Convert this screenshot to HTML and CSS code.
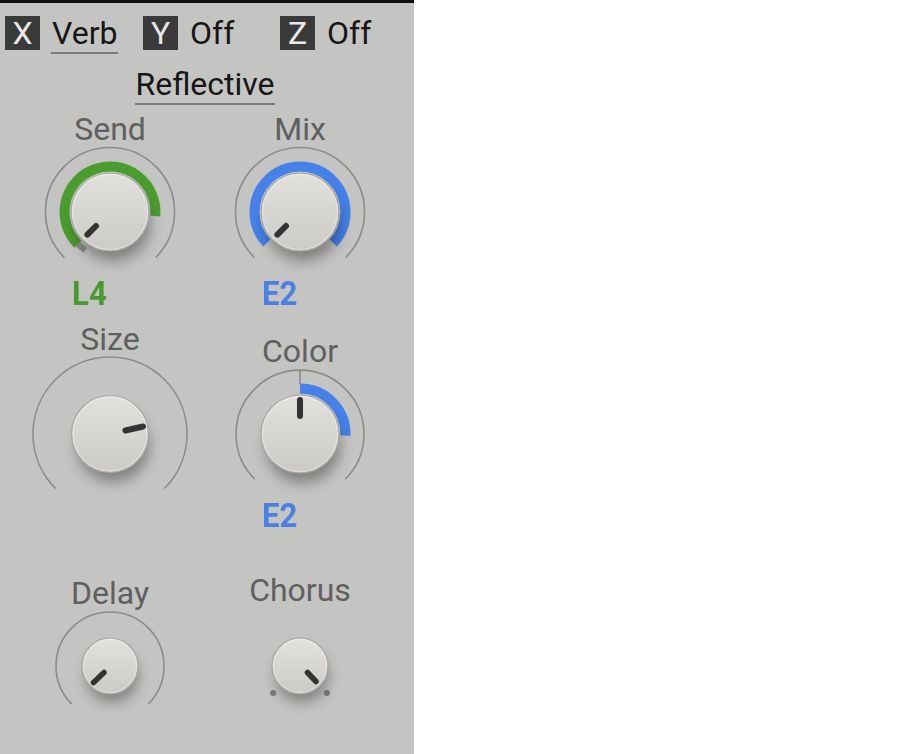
FILE: index.html
```html
<!DOCTYPE html>
<html lang="en">

<head>
  <meta charset="UTF-8">
  <meta name="viewport" content="width=device-width, initial-scale=1.0">
  <title>Verb - Reflective</title>
  <link rel="stylesheet" href="styles.css">
</head>

<body>
  <div class="panel">
    <div class="slots">
      <div class="slot slot-x"><span class="key">X</span><span class="mode mode-on">Verb</span></div>
      <div class="slot slot-y"><span class="key">Y</span><span class="mode">Off</span></div>
      <div class="slot"><span class="key">Z</span><span class="mode">Off</span></div>
    </div>
    <div class="preset"><span>Reflective</span></div>

    <div class="row row-1">
      <div class="cell">
        <div class="label">Send</div>
        <svg class="knob" width="190" height="128" viewBox="-95 -64 190 128">
          <path class="track" d="M -45.6 45.6 A 64.5 64.5 0 1 1 45.6 45.6" />
          <path class="stub" d="M -24.78 38.16 A 45.5 45.5 0 0 1 -32.17 32.17" />
          <path class="ring ring-green" d="M -32.17 32.17 A 45.5 45.5 0 1 1 45.33 3.97" />
          <circle class="shadow" cx="3" cy="12" r="37" />
          <circle class="face" r="39" />
          <circle class="gloss" r="37.5" />
          <line class="pointer" x1="-14" y1="14" x2="-22.6" y2="22.6" />
        </svg>
        <div class="value value-green"><span>L4</span></div>
      </div>
      <div class="cell">
        <div class="label">Mix</div>
        <svg class="knob" width="190" height="128" viewBox="-95 -64 190 128">
          <path class="track" d="M -45.6 45.6 A 64.5 64.5 0 1 1 45.6 45.6" />
          <path class="ring ring-blue" d="M -33.28 31.03 A 45.5 45.5 0 1 1 33.28 31.03" />
          <circle class="shadow" cx="3" cy="12" r="37" />
          <circle class="face" r="39" />
          <circle class="gloss" r="37.5" />
          <line class="pointer" x1="-14" y1="14" x2="-22.6" y2="22.6" />
        </svg>
        <div class="value value-blue"><span>E2</span></div>
      </div>
    </div>

    <div class="row row-2">
      <div class="cell">
        <div class="label">Size</div>
        <svg class="knob" width="190" height="140" viewBox="-95 -76 190 140">
          <path class="track" d="M -54.45 54.45 A 77 77 0 1 1 54.45 54.45" />
          <circle class="shadow" cx="3" cy="12" r="36" />
          <circle class="face" r="38.5" />
          <circle class="gloss" r="37" />
          <line class="pointer" x1="15.5" y1="-3.5" x2="33" y2="-7.5" />
        </svg>
      </div>
      <div class="cell cell-low">
        <div class="label">Color</div>
        <svg class="knob" width="190" height="128" viewBox="-95 -64 190 128">
          <path class="track" d="M -45.3 45.3 A 64 64 0 1 1 45.3 45.3" />
          <line class="tick" x1="0" y1="-64" x2="0" y2="-50" />
          <path class="ring ring-blue" d="M 0 -45.5 A 45.5 45.5 0 0 1 45.47 1.59" />
          <circle class="shadow" cx="3" cy="12" r="37" />
          <circle class="face" r="39" />
          <circle class="gloss" r="37.5" />
          <line class="pointer" x1="0" y1="-18" x2="0" y2="-34" />
        </svg>
        <div class="value value-blue"><span>E2</span></div>
      </div>
    </div>

    <div class="row row-3">
      <div class="cell cell-delay">
        <div class="label">Delay</div>
        <svg class="knob" width="190" height="120" viewBox="-95 -54 190 120">
          <path class="track" d="M -38.18 38.18 A 54 54 0 1 1 38.18 38.18" />
          <circle class="shadow" cx="2" cy="10" r="26" />
          <circle class="face" r="28" />
          <circle class="gloss" r="26.5" />
          <line class="pointer pointer-sm" x1="-6" y1="6.5" x2="-16.5" y2="16.5" />
        </svg>
      </div>
      <div class="cell">
        <div class="label">Chorus</div>
        <svg class="knob" width="190" height="120" viewBox="-95 -57 190 120">
          <circle class="dot" cx="-26.9" cy="26.9" r="3" />
          <circle class="dot" cx="26.9" cy="26.9" r="3" />
          <circle class="shadow" cx="2" cy="10" r="26" />
          <circle class="face" r="28" />
          <circle class="gloss" r="26.5" />
          <line class="pointer pointer-sm" x1="7.5" y1="6.5" x2="16" y2="15.5" />
        </svg>
      </div>
    </div>
  </div>

  <svg class="defs" width="0" height="0">
    <defs>
      <linearGradient id="knobFace" x1="0" y1="0" x2="0" y2="1">
        <stop offset="0" stop-color="#e2e1de" />
        <stop offset="1" stop-color="#cbcac6" />
      </linearGradient>
      <filter id="knobShadow" x="-60%" y="-60%" width="220%" height="220%">
        <feGaussianBlur stdDeviation="7" />
      </filter>
    </defs>
  </svg>
</body>

</html>
```

FILE: styles.css
```css
body {
  margin: 0;
  background: #ffffff;
  font-family: Roboto, "Liberation Sans", sans-serif;
}

.panel {
  width: 414px;
  height: 754px;
  box-sizing: border-box;
  border-top: 3px solid #111;
  background: #c4c4c2;
  overflow: hidden;
}

/* X / Y / Z slots */
.slots {
  display: flex;
  margin-top: 11px;
  padding-left: 5px;
}

.slot {
  display: flex;
  align-items: flex-start;
  gap: 12px;
}

.slot-x {
  width: 138px;
}

.slot-y {
  width: 137px;
}

.key {
  width: 35px;
  height: 34px;
  margin-top: 2px;
  background: #3a3a3a;
  color: #e9e9e9;
  font-size: 32px;
  line-height: 34px;
  text-align: center;
}

.mode {
  font-size: 32px;
  line-height: 38px;
  color: #161616;
}

.mode-on {
  padding: 0 1px;
  margin-left: -1px;
  border-bottom: 2px solid #7b7b7b;
}

.preset {
  display: flex;
  justify-content: center;
  margin-top: 11px;
  padding-right: 4px;
}

.preset span {
  font-size: 32px;
  line-height: 38px;
  color: #161616;
  border-bottom: 2px solid #7b7b7b;
}

/* knob grid */
.row {
  display: flex;
  padding-left: 15px;
}

.row-1 {
  margin-top: 5px;
}

.row-2 {
  margin-top: 10px;
}

.row-3 {
  margin-top: 39px;
}

.cell {
  width: 190px;
  display: flex;
  flex-direction: column;
}

.cell-low {
  padding-top: 12px;
}

.cell-delay {
  padding-top: 3px;
}

.label {
  font-size: 32px;
  line-height: 38px;
  color: #5f5f5f;
  text-align: center;
}

.knob {
  display: block;
  overflow: visible;
}

.value {
  padding-left: 57px;
  font-size: 34px;
  font-weight: 700;
  line-height: 34px;
}

.value span {
  display: inline-block;
  transform: scaleX(0.92);
  transform-origin: left center;
}

.value-green {
  color: #4a9b2f;
}

.value-blue {
  color: #4a80e4;
}

/* svg parts */
.track {
  fill: none;
  stroke: #8b8b89;
  stroke-width: 1.6;
}

.tick {
  stroke: #8b8b89;
  stroke-width: 1.6;
}

.ring {
  fill: none;
  stroke-width: 10;
}

.ring-green {
  stroke: #4b9c2f;
}

.ring-blue {
  stroke: #4581e8;
}

.stub {
  fill: none;
  stroke: #8e8d8a;
  stroke-width: 6;
}

.dot {
  fill: #7c7c7a;
}

.shadow {
  fill: #000;
  opacity: 0.35;
  filter: url(#knobShadow);
}

.face {
  fill: url(#knobFace);
  stroke: #a8a7a3;
  stroke-width: 1.2;
}

.gloss {
  fill: none;
  stroke: rgba(255, 255, 255, 0.4);
  stroke-width: 1;
}

.pointer {
  stroke: #333;
  stroke-width: 6;
  stroke-linecap: round;
}

.pointer-sm {
  stroke-width: 5.5;
}

.defs {
  display: block;
}
```
